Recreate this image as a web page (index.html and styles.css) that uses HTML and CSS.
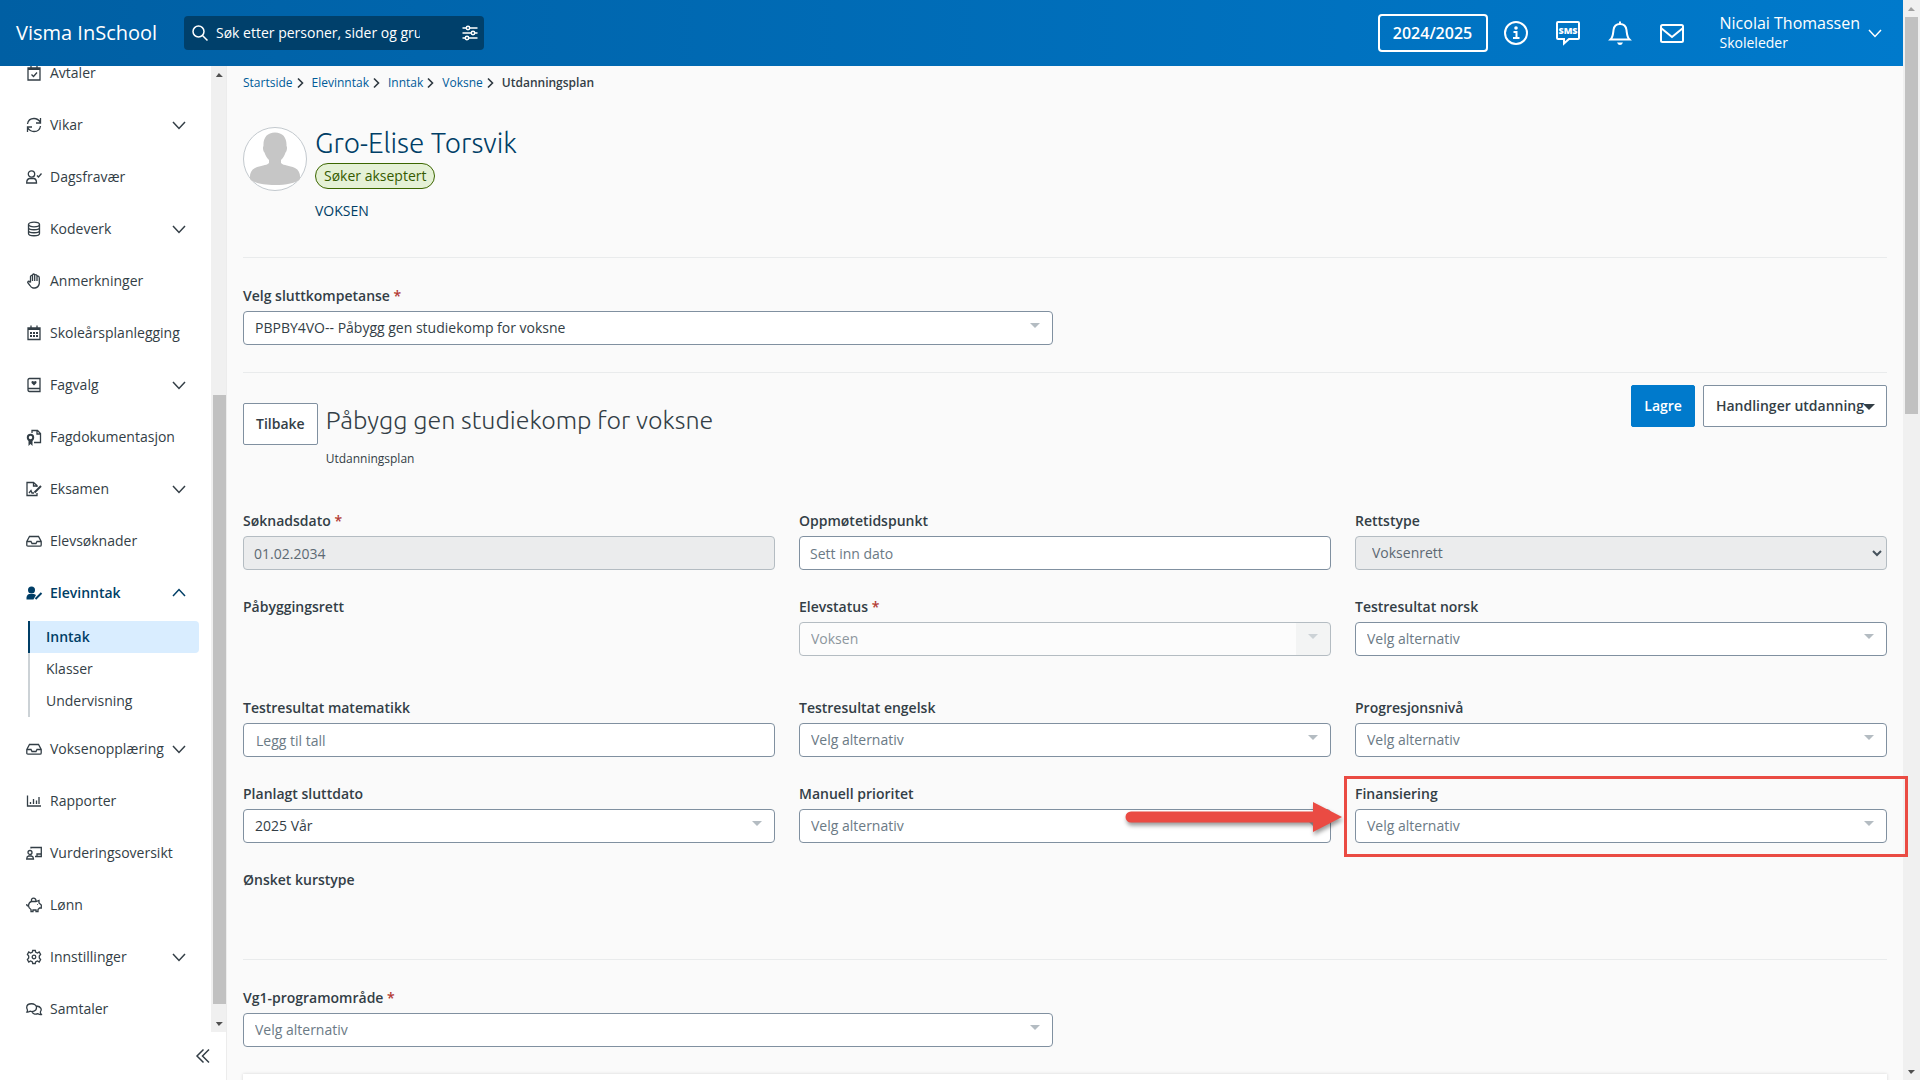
FILE: index.html
```html
<!DOCTYPE html>
<html lang="nb">
<head>
    <meta charset="UTF-8">
    <meta name="viewport" content="width=device-width, initial-scale=1.0">
    <title>Utdanningsplan - Visma InSchool</title>
    <link rel="stylesheet" href="styles.css">
</head>
<body>
    <div class="page">
        <!-- Top bar -->
        <header class="topbar">
            <a href="#" class="brand">Visma InSchool</a>
            <div class="search">
                <svg class="icon" viewBox="0 0 16 16"><circle cx="6.5" cy="6.5" r="5.5"/><path d="M10.5 10.5L15.5 15.5"/></svg>
                <input type="text" aria-label="Søk" placeholder="Søk etter personer, sider og grupper">
                <button class="icon-button" aria-label="Filter">
                    <svg class="icon" viewBox="0 0 16 16"><path d="M0.500 3H15.500M0.500 8H15.500M0.500 13H15.500"/><g class="knob"><circle cx="6" cy="3" r="1.700"/><circle cx="11" cy="8" r="1.700"/><circle cx="5" cy="13" r="1.700"/></g></svg>
                </button>
            </div>
            <div class="topbar-actions">
                <button class="year-button">2024/2025</button>
                <button class="icon-button" aria-label="Informasjon">
                    <svg class="icon-large" viewBox="0 0 24 24"><circle cx="12" cy="12" r="11"/><circle class="solid" cx="12" cy="7" r="1.800"/><path class="thick" d="M9.500 11H12.500V17M9 17H15.500"/></svg>
                </button>
                <button class="icon-button" aria-label="SMS">
                    <svg class="icon-large" viewBox="0 0 24 24"><path d="M2 1H22Q23 1 23 2V17Q23 18 22 18H13L8 22.500V18H2Q1 18 1 17V2Q1 1 2 1Z"/><text x="12" y="13" text-anchor="middle">SMS</text></svg>
                </button>
                <button class="icon-button" aria-label="Varsler">
                    <svg class="icon-large" viewBox="0 0 24 24"><path d="M12 0.500V3M2.500 18.500C5 16 5 13 5.500 9C6 5 8.500 3 12 3S18 5 18.500 9C19 13 19 16 21.500 18.500Z"/><path class="solid" d="M9 21.500H15Q14 24 12 24T9 21.500Z"/></svg>
                </button>
                <button class="icon-button" aria-label="Meldinger">
                    <svg class="icon-large" viewBox="0 0 24 24"><rect x="1" y="4" width="22" height="17" rx="1.500"/><path d="M1 7L12 16L23 7"/></svg>
                </button>
                <button class="user">
                    <span class="user-text">
                        <span class="user-name">Nicolai Thomassen</span>
                        <span class="user-role">Skoleleder</span>
                    </span>
                    <svg class="chevron" viewBox="0 0 14 14"><path d="M1 4L7 10.500L13 4"/></svg>
                </button>
            </div>
        </header>

        <div class="layout">
            <!-- Side menu -->
            <aside class="sidebar">
                <div class="sidebar-scroll">
                    <nav class="menu">
                        <a href="#" class="menu-item">
                            <svg class="icon" viewBox="0 0 16 16"><path d="M2 3H14V15H2ZM5 0.500V3M11 0.500V3"/><path class="thick" d="M2 4H14"/><path d="M5.500 9.500L7.500 11.500L11 7.500"/></svg>
                            <span>Avtaler</span>
                        </a>
                        <a href="#" class="menu-item">
                            <svg class="icon" viewBox="0 0 16 16"><path d="M1.500 7C2 3.500 4.500 1.500 8 1.500C11 1.500 13 3 14.500 5.500M14.500 1V6H10M14.500 9C14 12.500 11.500 14.500 8 14.500C5 14.500 3 13 1.500 10.500M1.500 15V10H6"/></svg>
                            <span>Vikar</span>
                            <svg class="chevron" viewBox="0 0 14 14"><path d="M1 4L7 10.500L13 4"/></svg>
                        </a>
                        <a href="#" class="menu-item">
                            <svg class="icon" viewBox="0 0 16 16"><circle cx="5.500" cy="5" r="3.200"/><path d="M3.500 9.500H8Q10.500 10 10.500 14H0.700Q0.700 10 3.500 9.500ZM11 6.500L12.500 8L15.500 4.500"/></svg>
                            <span>Dagsfravær</span>
                        </a>
                        <a href="#" class="menu-item">
                            <svg class="icon" viewBox="0 0 16 16"><ellipse cx="8" cy="3.500" rx="5.500" ry="2.300"/><path d="M2.500 3.500V12.500C2.500 15.500 13.500 15.500 13.500 12.500V3.500M2.500 6.500C2.500 9.500 13.500 9.500 13.500 6.500M2.500 9.500C2.500 12.500 13.500 12.500 13.500 9.500"/></svg>
                            <span>Kodeverk</span>
                            <svg class="chevron" viewBox="0 0 14 14"><path d="M1 4L7 10.500L13 4"/></svg>
                        </a>
                        <a href="#" class="menu-item">
                            <svg class="icon" viewBox="0 0 16 16"><path d="M4.500 9.500V3.500Q5.500 1.500 6.500 3V2Q7.700 0 8.700 2Q10.500 1 11 3Q13 2.500 13.300 5V10.500Q12.500 14.500 9 15H7Q5 14.500 4 12.500L1.700 9.500Q2 7 4.500 9.500M6.500 3V8M8.700 2V8M11 3V8"/></svg>
                            <span>Anmerkninger</span>
                        </a>
                        <a href="#" class="menu-item">
                            <svg class="icon" viewBox="0 0 16 16"><path d="M2 3H14V14.500H2ZM5 0.500V3M11 0.500V3"/><path class="thick" d="M2 4H14"/><path class="dots" d="M4 8H12.500M4 11H12.500"/></svg>
                            <span>Skoleårsplanlegging</span>
                        </a>
                        <a href="#" class="menu-item">
                            <svg class="icon" viewBox="0 0 16 16"><path d="M3.500 1.500H14V14.500H3.500Q2 14.500 2 12.800V3Q2 1.500 3.500 1.500ZM2.500 11.500H14"/><path class="solid" d="M8 8.500L5.500 6Q5 3.800 7 4L8 4.800L9 4Q11 3.800 10.500 6Z"/></svg>
                            <span>Fagvalg</span>
                            <svg class="chevron" viewBox="0 0 14 14"><path d="M1 4L7 10.500L13 4"/></svg>
                        </a>
                        <a href="#" class="menu-item">
                            <svg class="icon" viewBox="0 0 16 16"><path d="M6 4V1.500H11.500L14.500 4.500V13.500H8M11 1.500V5H14.500"/><circle class="thick" cx="4.500" cy="8.500" r="2.700"/><path class="thick" d="M3.500 11V14.500L4.500 13.500L5.500 14.500V11"/></svg>
                            <span>Fagdokumentasjon</span>
                        </a>
                        <a href="#" class="menu-item">
                            <svg class="icon" viewBox="0 0 16 16"><path d="M11 6V4.500L7.500 1.500H1V14.500H11V12M7.500 1.500V5H11M3 12L5 9.500L6 12H8"/><path class="thick" d="M8.500 11.500L15 5"/></svg>
                            <span>Eksamen</span>
                            <svg class="chevron" viewBox="0 0 14 14"><path d="M1 4L7 10.500L13 4"/></svg>
                        </a>
                        <a href="#" class="menu-item">
                            <svg class="icon" viewBox="0 0 16 16"><path d="M0.800 8.500L3.500 3.500H12.500L15.200 8.500V12Q15.200 13.200 14 13.200H2Q0.800 13.200 0.800 12ZM1 8.500H5L6 10.500H10L11 8.500H15"/></svg>
                            <span>Elevsøknader</span>
                        </a>
                        <a href="#" class="menu-item menu-item-open">
                            <svg class="icon" viewBox="0 0 16 16"><circle class="solid" cx="5.500" cy="5" r="3.500"/><path class="solid" d="M3 9H8L10 10L7.500 14.500H0.500Q0 10 3 9Z"/><path class="thick" d="M9.500 14L15.500 8"/></svg>
                            <span>Elevinntak</span>
                            <svg class="chevron" viewBox="0 0 14 14"><path d="M1 10L7 3.500L13 10"/></svg>
                        </a>
                        <div class="submenu">
                            <a href="#" class="submenu-item submenu-item-active">Inntak</a>
                            <a href="#" class="submenu-item">Klasser</a>
                            <a href="#" class="submenu-item">Undervisning</a>
                        </div>
                        <a href="#" class="menu-item">
                            <svg class="icon" viewBox="0 0 16 16"><path d="M0.800 8.500L3.500 3.500H12.500L15.200 8.500V12Q15.200 13.200 14 13.200H2Q0.800 13.200 0.800 12ZM1 8.500H5L6 10.500H10L11 8.500H15"/></svg>
                            <span>Voksenopplæring</span>
                            <svg class="chevron" viewBox="0 0 14 14"><path d="M1 4L7 10.500L13 4"/></svg>
                        </a>
                        <a href="#" class="menu-item">
                            <svg class="icon" viewBox="0 0 16 16"><path d="M1.500 2.500V13H15M4.500 9V11M7.500 6V11M10.500 7.500V11M13 4V11"/></svg>
                            <span>Rapporter</span>
                        </a>
                        <a href="#" class="menu-item">
                            <svg class="icon" viewBox="0 0 16 16"><circle cx="4" cy="7.500" r="2"/><path d="M2.500 11H5.500Q7.500 11.500 7.500 14H0.700Q0.700 11.500 2.500 11ZM5 3.500V2.500H15.300V11.500H9M11 11V9H15"/></svg>
                            <span>Vurderingsoversikt</span>
                        </a>
                        <a href="#" class="menu-item">
                            <svg class="icon" viewBox="0 0 16 16"><path d="M5.500 4.500H10L13 3.500V6L15.300 8V11H13.500L12 12.500V14.500H10V13H7V14.500H5V12.500Q2.500 11 2.500 8.500Q3 5 5.500 4.500ZM5.500 4.500C4.500 0 10.500 0 10 4.500M2.500 9Q0.500 9 0.800 7"/><circle class="solid" cx="11.500" cy="7.500" r="0.500"/></svg>
                            <span>Lønn</span>
                        </a>
                        <a href="#" class="menu-item">
                            <svg class="icon" viewBox="0 0 16 16"><path d="M6.700 1.500H9.300L9.800 3.300L11.500 4L13.200 3L14.600 5.500L13.300 7V9L14.600 10.500L13.200 13L11.500 12L9.800 12.700L9.300 14.500H6.700L6.200 12.700L4.500 12L2.800 13L1.400 10.500L2.700 9V7L1.400 5.500L2.800 3L4.500 4L6.200 3.300Z"/><circle cx="8" cy="8" r="1.800"/></svg>
                            <span>Innstillinger</span>
                            <svg class="chevron" viewBox="0 0 14 14"><path d="M1 4L7 10.500L13 4"/></svg>
                        </a>
                        <a href="#" class="menu-item">
                            <svg class="icon" viewBox="0 0 16 16"><path d="M1 11C2.500 9 0.700 8.500 0.700 6.500C0.700 1.500 10.500 1.500 10.500 6.500C10.500 10.500 6 11 4 10.200Q2.500 11.200 1 11ZM10.500 5C15.500 5.500 16 9 14.500 10.500C14 11.500 14.500 12.500 15.300 13.500Q13.500 13.800 12 12.700C10 13.500 7 13.500 6 10.800"/></svg>
                            <span>Samtaler</span>
                        </a>
                    </nav>
                    <div class="scrollbar scrollbar-menu" aria-hidden="true">
                        <span class="scroll-arrow scroll-arrow-up"></span>
                        <span class="scroll-space"></span>
                        <span class="scroll-thumb"></span>
                        <span class="scroll-arrow"></span>
                    </div>
                </div>
                <button class="collapse" aria-label="Skjul meny">
                    <svg class="chevron" viewBox="0 0 14 14"><path d="M7.500 0.500L1 7L7.500 13.500M13 0.500L6.500 7L13 13.500"/></svg>
                </button>
            </aside>

            <!-- Content -->
            <main class="content">
                <nav class="breadcrumb">
                    <a href="#">Startside</a>
                    <svg viewBox="0 0 7 10"><path d="M1 0.500L5.500 5L1 9.500"/></svg>
                    <a href="#">Elevinntak</a>
                    <svg viewBox="0 0 7 10"><path d="M1 0.500L5.500 5L1 9.500"/></svg>
                    <a href="#">Inntak</a>
                    <svg viewBox="0 0 7 10"><path d="M1 0.500L5.500 5L1 9.500"/></svg>
                    <a href="#">Voksne</a>
                    <svg viewBox="0 0 7 10"><path d="M1 0.500L5.500 5L1 9.500"/></svg>
                    <span>Utdanningsplan</span>
                </nav>

                <section class="person">
                    <svg class="avatar" viewBox="0 0 64 64"><circle class="avatar-ring" cx="32" cy="32" r="31.500"/><path d="M32 5.500C40 5.500 44 11 43.500 19C44.500 20 44 24 42.500 25.500C41.500 29 40 31 38 33V36C41 39 46 38 52 41C56 43 57.500 47 57 52C50 60 14 60 7 52C6.500 47 8 43 12 41C18 38 23 39 26 36V33C24 31 22.500 29 21.500 25.500C20 24 19.500 20 20.500 19C20 11 24 5.500 32 5.500Z"/></svg>
                    <div class="person-info">
                        <h1>Gro-Elise Torsvik</h1>
                        <span class="status">Søker akseptert</span>
                        <span class="person-type">VOKSEN</span>
                    </div>
                </section>

                <section class="section">
                    <div class="form-half">
                        <div class="field">
                            <label for="sluttkompetanse">Velg sluttkompetanse <span class="required">*</span></label>
                            <select id="sluttkompetanse" class="filled"><option>PBPBY4VO-- Påbygg gen studiekomp for voksne</option></select>
                        </div>
                    </div>
                </section>

                <section class="section plan">
                    <div class="plan-header">
                        <button class="button button-back">Tilbake</button>
                        <div class="plan-title">
                            <h2>Påbygg gen studiekomp for voksne</h2>
                            <p>Utdanningsplan</p>
                        </div>
                        <div class="plan-actions">
                            <button class="button button-primary">Lagre</button>
                            <button class="button">Handlinger utdanning<span class="caret"></span></button>
                        </div>
                    </div>

                    <div class="form-grid">
                        <div class="field">
                            <label for="soknadsdato">Søknadsdato <span class="required">*</span></label>
                            <input type="text" id="soknadsdato" value="01.02.2034" disabled>
                        </div>
                        <div class="field">
                            <label for="oppmote">Oppmøtetidspunkt</label>
                            <input type="text" id="oppmote" placeholder="Sett inn dato">
                        </div>
                        <div class="field">
                            <label for="rettstype">Rettstype</label>
                            <select id="rettstype" class="plain-select" disabled><option>Voksenrett</option></select>
                        </div>

                        <div class="field">
                            <span class="label">Påbyggingsrett</span>
                        </div>
                        <div class="field field-tall">
                            <label for="elevstatus">Elevstatus <span class="required">*</span></label>
                            <select id="elevstatus" disabled><option>Voksen</option></select>
                        </div>
                        <div class="field">
                            <label for="norsk">Testresultat norsk</label>
                            <select id="norsk"><option>Velg alternativ</option></select>
                        </div>

                        <div class="field">
                            <label for="matematikk">Testresultat matematikk</label>
                            <input type="number" id="matematikk" placeholder="Legg til tall">
                        </div>
                        <div class="field">
                            <label for="engelsk">Testresultat engelsk</label>
                            <select id="engelsk"><option>Velg alternativ</option></select>
                        </div>
                        <div class="field">
                            <label for="progresjon">Progresjonsnivå</label>
                            <select id="progresjon"><option>Velg alternativ</option></select>
                        </div>

                        <div class="field">
                            <label for="sluttdato">Planlagt sluttdato</label>
                            <select id="sluttdato" class="filled"><option>2025 Vår</option></select>
                        </div>
                        <div class="field">
                            <label for="prioritet">Manuell prioritet</label>
                            <select id="prioritet"><option>Velg alternativ</option></select>
                        </div>
                        <div class="field field-marked">
                            <label for="finansiering">Finansiering</label>
                            <select id="finansiering"><option>Velg alternativ</option></select>
                            <svg class="pointer" viewBox="0 0 218 30"><path d="M6 9.500H188V0L217 15L188 30V20.500H6A5.500 5.500 0 0 1 6 9.500Z"/></svg>
                        </div>

                        <div class="field">
                            <span class="label">Ønsket kurstype</span>
                        </div>
                    </div>
                </section>

                <section class="section">
                    <div class="form-half">
                        <div class="field">
                            <label for="programomrade">Vg1-programområde <span class="required">*</span></label>
                            <select id="programomrade"><option>Velg alternativ</option></select>
                        </div>
                    </div>
                    <div class="card"></div>
                </section>
            </main>
        </div>
    </div>

    <div class="scrollbar scrollbar-page" aria-hidden="true">
        <span class="scroll-arrow scroll-arrow-up"></span>
        <span class="scroll-thumb"></span>
        <span class="scroll-space"></span>
        <span class="scroll-arrow"></span>
    </div>
</body>
</html>
```

FILE: styles.css
```css
:root {
    --blue: #007acc;
    --blue-dark: #003e66;
    --link: #005b99;
    --text: #333e46;
    --text-muted: #6b7a85;
    --border: #8090a0;
    --border-disabled: #b4bcc2;
    --mark: #ea4b43;
}

* {
    box-sizing: border-box;
}

body {
    margin: 0;
    display: flex;
    height: 100vh;
    overflow: hidden;
    font-family: "Open Sans", "Noto Sans", sans-serif;
    font-size: 14px;
    line-height: 20px;
    color: var(--text);
    background: #fafafa;
}

button,
input,
select {
    font: inherit;
    color: inherit;
    margin: 0;
}

button {
    cursor: pointer;
}

a {
    color: inherit;
    text-decoration: none;
}

svg {
    display: block;
    flex-shrink: 0;
    fill: none;
    stroke: currentColor;
    stroke-width: 1.3;
    overflow: visible;
}

svg .solid {
    fill: currentColor;
    stroke: none;
}

svg .thick {
    stroke-width: 2;
}

svg .dots {
    stroke-width: 2;
    stroke-dasharray: 2 1;
}

.icon {
    width: 16px;
    height: 16px;
}

.icon-large {
    width: 24px;
    height: 24px;
    stroke-width: 2;
}

.icon-large text {
    font-size: 9px;
    font-weight: 800;
    fill: currentColor;
    stroke: none;
}

.chevron {
    width: 14px;
    height: 14px;
    stroke-width: 1.5;
}

.page {
    flex: 1;
    min-width: 0;
    display: flex;
    flex-direction: column;
}

/* Top bar */
.topbar {
    flex-shrink: 0;
    display: flex;
    align-items: center;
    height: 66px;
    padding: 0 21px 0 16px;
    color: #fff;
    background: linear-gradient(90deg, #005fa3, #007acc);
}

.brand {
    width: 168px;
    font-size: 20px;
    line-height: 28px;
}

.search {
    display: flex;
    align-items: center;
    gap: 8px;
    width: 300px;
    height: 34px;
    padding: 0 6px 0 8px;
    border-radius: 4px;
    background: #00406b;
}

.search input {
    width: 204px;
    padding: 0;
    border: 0;
    outline: 0;
    background: none;
}

.search input::placeholder {
    color: #fff;
    opacity: 1;
}

.search .icon-button {
    margin-left: auto;
}

.search .icon {
    stroke-width: 1.5;
}

.search .knob {
    fill: #00406b;
}

.icon-button {
    padding: 0;
    border: 0;
    background: none;
}

.topbar-actions {
    display: flex;
    align-items: center;
    gap: 28px;
    margin-left: auto;
}

.year-button {
    width: 110px;
    height: 38px;
    margin-right: -12px;
    padding: 0;
    border: 2px solid #fff;
    border-radius: 4px;
    font-size: 16px;
    font-weight: 600;
    background: none;
}

.user {
    display: flex;
    align-items: center;
    gap: 8px;
    margin-left: 8px;
    padding: 0;
    border: 0;
    background: none;
    text-align: left;
}

.user-text {
    display: flex;
    flex-direction: column;
}

.user-name {
    font-size: 16px;
}

/* Side menu */
.layout {
    flex: 1;
    min-height: 0;
    display: flex;
}

.sidebar {
    flex-shrink: 0;
    display: flex;
    flex-direction: column;
    width: 227px;
    border-right: 1px solid #ececec;
    background: #fff;
}

.sidebar-scroll {
    flex: 1;
    min-height: 0;
    display: flex;
    overflow: hidden;
}

.menu {
    flex: 1;
    margin-top: -19px;
}

.menu-item {
    display: flex;
    align-items: center;
    gap: 8px;
    height: 52px;
    padding: 0 25px 0 26px;
}

.menu-item .chevron {
    margin-left: auto;
}

.menu-item-open {
    font-weight: 600;
    color: var(--blue-dark);
}

.submenu {
    margin: 2px 12px 6px 28px;
}

.submenu-item {
    display: block;
    padding: 6px 16px;
    border-left: 2px solid #ccd2d6;
}

.submenu-item-active {
    border-left-color: var(--blue-dark);
    border-radius: 0 4px 4px 0;
    font-weight: 600;
    color: var(--blue-dark);
    background: #d9edff;
}

.collapse {
    display: flex;
    align-items: center;
    justify-content: flex-end;
    height: 48px;
    padding: 0 16px;
    border: 0;
    background: none;
}

/* Scrollbars */
.scrollbar {
    flex-shrink: 0;
    display: flex;
    flex-direction: column;
    align-items: center;
    width: 17px;
    background: #f0f0f0;
}

.scroll-arrow {
    width: 17px;
    height: 17px;
    background: #505050;
    clip-path: polygon(5px 7px, 12px 7px, 8px 11px);
}

.scroll-arrow-up {
    clip-path: polygon(5px 11px, 12px 11px, 8px 7px);
}

.scroll-thumb {
    width: 13px;
    background: #c1c1c1;
}

.scrollbar-menu .scroll-thumb {
    height: 63%;
    margin-bottom: 11px;
}

.scroll-space {
    flex: 1;
}

.scrollbar-page .scroll-thumb {
    height: 397px;
}

.scrollbar-page .scroll-arrow-up {
    background: #a0a0a0;
}

/* Content */
.content {
    flex: 1;
    min-width: 0;
    padding: 7px 16px 0 16px;
}

.breadcrumb {
    display: flex;
    align-items: center;
    gap: 4px;
    font-size: 12px;
    color: var(--link);
}

.breadcrumb svg {
    width: 7px;
    height: 10px;
    margin-right: 4px;
    stroke-width: 1.6;
    color: #2f3940;
}

.breadcrumb span {
    font-weight: 600;
    color: var(--text);
}

.person {
    display: flex;
    gap: 8px;
    height: 164px;
    padding-top: 34px;
}

.avatar {
    width: 64px;
    height: 64px;
    fill: #c6c6c6;
    stroke: none;
}

.avatar-ring {
    fill: #fff;
    stroke: #c3c9ce;
    stroke-width: 1;
}

.person-info {
    display: flex;
    flex-direction: column;
    align-items: flex-start;
    color: var(--blue-dark);
}

h1,
h2 {
    margin: 0;
    font-family: Ubuntu, "Noto Sans", sans-serif;
    font-weight: 300;
}

h1 {
    font-size: 28px;
    line-height: 32px;
}

.status {
    margin: 4px 0 12px;
    padding: 2px 8px;
    border: 1px solid #3c6600;
    border-radius: 13px;
    color: #365b00;
    background: #e5f1d6;
}

.section {
    padding-top: 28px;
    border-top: 1px solid #e9ebec;
}

.form-half,
.form-grid {
    display: grid;
    gap: 27px 24px;
}

.form-half {
    grid-template-columns: repeat(2, 1fr);
    padding-bottom: 27px;
}

.form-grid {
    grid-template-columns: repeat(3, 1fr);
    padding-bottom: 69px;
}

.field {
    display: flex;
    flex-direction: column;
    gap: 5px;
    min-width: 0;
}

.field-tall {
    padding-bottom: 15px;
}

label,
.label {
    font-weight: 600;
}

.required {
    color: #b33a34;
}

.field input,
.field select {
    width: 100%;
    height: 34px;
    padding: 0 11px;
    border: 1px solid var(--border);
    border-radius: 4px;
    background-color: #fff;
}

.field input {
    padding: 0 10px;
}

.field input[type="number"] {
    padding: 0 12px;
}

.field input::placeholder {
    color: var(--text-muted);
    opacity: 1;
}

.field select {
    appearance: none;
    color: var(--text-muted);
    background-image: url("data:image/svg+xml,%3Csvg xmlns='http://www.w3.org/2000/svg' width='10' height='5'%3E%3Cpath d='M0 0H10L5 5Z' fill='%23b4bcc2'/%3E%3C/svg%3E");
    background-repeat: no-repeat;
    background-position: right 12px top 11px;
}

.field select.filled {
    color: var(--text);
}

.field input:disabled,
.field select.plain-select {
    border-color: var(--border-disabled);
    color: #5d6973;
    background-color: #ebeced;
    opacity: 1;
}

.field select.plain-select {
    padding: 0 16px;
    background-image: url("data:image/svg+xml,%3Csvg xmlns='http://www.w3.org/2000/svg' width='10' height='7'%3E%3Cpath d='M1 1L5 5L9 1' fill='none' stroke='%2346525c' stroke-width='2'/%3E%3C/svg%3E");
    background-position: right 4px center;
}

.field select:disabled:not(.plain-select) {
    border-color: var(--border-disabled);
    color: #8d979e;
    opacity: 1;
    background-color: #fcfcfc;
    background-image:
        url("data:image/svg+xml,%3Csvg xmlns='http://www.w3.org/2000/svg' width='10' height='5'%3E%3Cpath d='M0 0H10L5 5Z' fill='%23ccd2d6'/%3E%3C/svg%3E"),
        linear-gradient(#f3f4f4, #f3f4f4);
    background-size: 10px 5px, 34px 100%;
    background-position: right 12px top 11px, right top;
}

/* Plan header */
.section.plan {
    padding-top: 12px;
}

.plan-header {
    display: flex;
    align-items: flex-start;
    gap: 8px;
    height: 126px;
}

.button {
    height: 42px;
    padding: 0 12px;
    border: 1px solid var(--border);
    border-radius: 2px;
    font-weight: 600;
    white-space: nowrap;
    background: #fff;
}

.button-back {
    margin-top: 18px;
}

.button-primary {
    border-color: var(--blue);
    color: #fff;
    background: var(--blue);
}

.caret {
    display: inline-block;
    margin: 0 -1px;
    border: 6px solid transparent;
    border-top-color: currentColor;
    border-bottom: 0;
    vertical-align: middle;
}

.plan-title {
    padding-top: 18px;
}

h2 {
    font-size: 25px;
    line-height: 34px;
}

.plan-title p {
    margin: 12px 0 0;
    font-size: 12px;
}

.plan-actions {
    display: flex;
    gap: 8px;
    margin-left: auto;
}

/* Highlighted field */
.field-marked {
    position: relative;
}

.field-marked::after {
    content: "";
    position: absolute;
    inset: -8px -21px -14px -11px;
    border: 3px solid var(--mark);
    pointer-events: none;
}

.pointer {
    position: absolute;
    top: 18px;
    right: 100%;
    width: 218px;
    height: 30px;
    margin-right: 12px;
    fill: var(--mark);
    stroke: none;
    filter: drop-shadow(1px 3px 2px rgba(0, 0, 0, 0.4));
    pointer-events: none;
}

.card {
    height: 40px;
    background: #fff;
    box-shadow: 0 0 3px rgba(0, 0, 0, 0.15);
}
```
